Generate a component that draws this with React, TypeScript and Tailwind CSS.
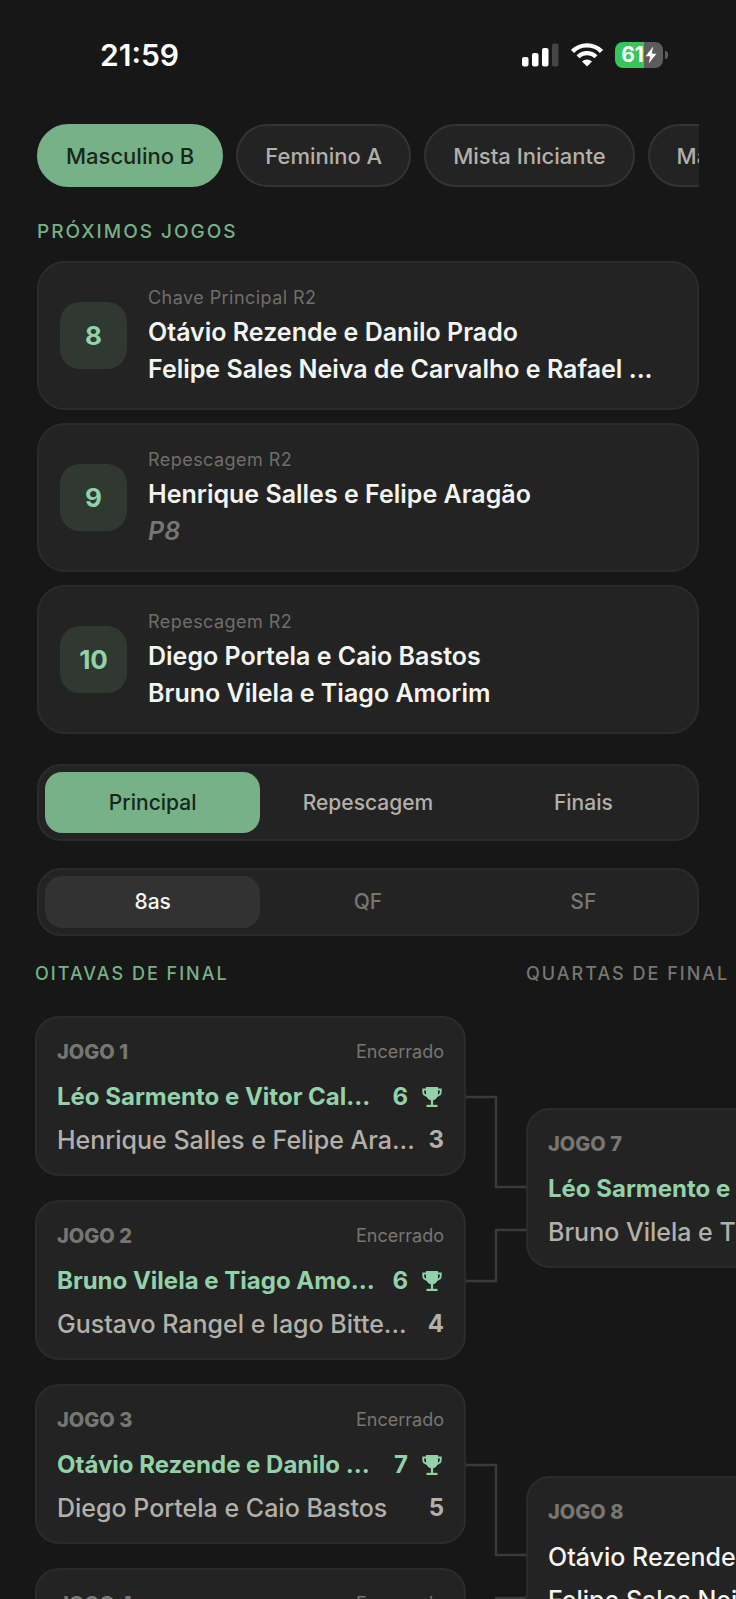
import { useState } from "react";
import clsx from "clsx";

type UpcomingGame = {
  number: number;
  stage: string;
  teams: string[];
};

type TeamScore = {
  name: string;
  score?: number;
  winner?: boolean;
};

type Match = {
  number: number;
  status?: string;
  teams: TeamScore[];
};

const categories = ["Masculino B", "Feminino A", "Mista Iniciante", "Masculino C"];
const brackets = ["Principal", "Repescagem", "Finais"];
const rounds = ["8as", "QF", "SF"];

const upcomingGames: UpcomingGame[] = [
  {
    number: 8,
    stage: "Chave Principal R2",
    teams: ["Otávio Rezende e Danilo Prado", "Felipe Sales Neiva de Carvalho e Rafael ..."],
  },
  { number: 9, stage: "Repescagem R2", teams: ["Henrique Salles e Felipe Aragão", "P8"] },
  {
    number: 10,
    stage: "Repescagem R2",
    teams: ["Diego Portela e Caio Bastos", "Bruno Vilela e Tiago Amorim"],
  },
];

const roundOf16: Match[] = [
  {
    number: 1,
    status: "Encerrado",
    teams: [
      { name: "Léo Sarmento e Vitor Cal...", score: 6, winner: true },
      { name: "Henrique Salles e Felipe Ara...", score: 3 },
    ],
  },
  {
    number: 2,
    status: "Encerrado",
    teams: [
      { name: "Bruno Vilela e Tiago Amo...", score: 6, winner: true },
      { name: "Gustavo Rangel e Iago Bitte...", score: 4 },
    ],
  },
  {
    number: 3,
    status: "Encerrado",
    teams: [
      { name: "Otávio Rezende e Danilo ...", score: 7, winner: true },
      { name: "Diego Portela e Caio Bastos", score: 5 },
    ],
  },
  { number: 4, status: "Encerrado", teams: [] },
];

const quarterFinals: Match[] = [
  {
    number: 7,
    teams: [{ name: "Léo Sarmento e Vitor Cal...", winner: true }, { name: "Bruno Vilela e Tiago Amorim" }],
  },
  {
    number: 8,
    teams: [{ name: "Otávio Rezende e Danilo Prado" }, { name: "Felipe Sales Neiva de Carv..." }],
  },
];

// "P8" means the loser of game 8, the team is not known yet
const isPlaceholder = (team: string) => /^[PV]\d+$/.test(team);

function TrophyIcon() {
  return (
    <svg viewBox="0 0 20 20" className="h-5 w-5 shrink-0" fill="none" stroke="currentColor" aria-hidden="true">
      <path d="M4 0h12v6.500c0 3.800-2.400 6.800-6 6.800S4 10.300 4 6.500z" fill="currentColor" stroke="none" />
      <path d="M5 2.500H1.200v1.800c0 2.700 1.700 4.500 4.300 4.700M15 2.500h3.800v1.800c0 2.700-1.700 4.500-4.300 4.700" strokeWidth="1.800" />
      <path d="M10 12v6.500" strokeWidth="2.200" />
      <path d="M4.500 18.900h11" strokeWidth="2.200" />
    </svg>
  );
}

function StatusBar() {
  return (
    <header className="flex h-[110px] shrink-0 items-center justify-between pr-[68px] pl-[100px] text-white">
      <span className="text-[30px] leading-9 font-semibold">21:59</span>
      <div className="flex items-center gap-3">
        <svg viewBox="0 0 37 24" className="h-6 w-[37px]" fill="currentColor" aria-hidden="true">
          <rect x="0" y="14" width="6.500" height="9.500" rx="2" />
          <rect x="10" y="10" width="6.500" height="13.500" rx="2" />
          <rect x="20" y="5" width="6.500" height="18.500" rx="2" />
          <rect x="30" y="0.500" width="6.500" height="23" rx="2" fill="#454545" />
        </svg>
        <svg viewBox="0 0 32 24" className="h-6 w-8" fill="none" stroke="currentColor" aria-hidden="true">
          <path d="M1.500 8.400a20.500 20.500 0 0 1 29 0" strokeWidth="4.400" />
          <path d="M7 13.800a12.700 12.700 0 0 1 18 0" strokeWidth="4.200" />
          <path d="M16 23.500l-5-5.100a7.200 7.200 0 0 1 10 0z" fill="currentColor" stroke="none" />
        </svg>
        <div className="flex items-center gap-0.5">
          <div className="flex h-[26px] w-12 items-center justify-center rounded-[8px] bg-linear-to-r from-[#35c759] from-60% to-[#5c5c5c] to-60% text-[21px] leading-6 font-bold">
            61
            <svg viewBox="0 0 12 18" className="ml-px h-[18px] w-3" fill="currentColor" aria-hidden="true">
              <path d="M8.200 0.500L0.500 10.200h4.700L3.700 17.500l7.800-9.700H6.800z" />
            </svg>
          </div>
          <span className="h-2 w-[3px] rounded-r-full bg-[#5c5c5c]" />
        </div>
      </div>
    </header>
  );
}

function CategoryPills() {
  const [selected, setSelected] = useState(categories[0]);

  return (
    <nav className="mt-3.5 flex shrink-0 gap-[13px] overflow-x-auto [scrollbar-width:none]">
      {categories.map((category) => (
        <button
          key={category}
          type="button"
          onClick={() => setSelected(category)}
          className={clsx(
            "h-[63px] shrink-0 rounded-full border-2 px-[27px] text-[22px] leading-7 font-medium",
            category === selected
              ? "border-[#76b187] bg-[#76b187] text-[#17271c]"
              : "border-[#333333] bg-[#232323] text-[#b3b0aa]",
          )}
        >
          {category}
        </button>
      ))}
    </nav>
  );
}

function UpcomingCard({ game }: { game: UpcomingGame }) {
  return (
    <li className="flex h-[149px] items-center gap-[21px] rounded-[28px] border-2 border-[#2b2b2b] bg-[#232323] px-[21px]">
      <span className="flex h-[67px] w-[67px] shrink-0 items-center justify-center rounded-[20px] bg-[#2f3932] text-[26px] leading-8 font-bold text-[#92d2a8]">
        {game.number}
      </span>
      <div className="min-w-0 pt-[3px]">
        <p className="mb-1 text-[18px] leading-6 tracking-wide text-[#6f6e6a]">{game.stage}</p>
        {game.teams.map((team) => (
          <p
            key={team}
            className={clsx(
              "text-[25px] leading-[37px] font-semibold whitespace-nowrap",
              isPlaceholder(team) ? "text-[#777671] italic" : "text-[#f4f4f1]",
            )}
          >
            {team}
          </p>
        ))}
      </div>
    </li>
  );
}

type SegmentedProps = {
  options: string[];
  variant: "primary" | "secondary";
};

function Segmented({ options, variant }: SegmentedProps) {
  const [selected, setSelected] = useState(options[0]);

  return (
    <div className="grid shrink-0 grid-cols-3 rounded-[24px] border-2 border-[#2b2b2b] bg-[#232323] p-1.5">
      {options.map((option) => (
        <button
          key={option}
          type="button"
          aria-pressed={option === selected}
          onClick={() => setSelected(option)}
          className={clsx(
            "rounded-[17px] text-[21px] font-medium",
            variant === "primary" ? "h-[61px]" : "h-[52px]",
            variant === "primary" && (option === selected ? "bg-[#76b187] text-[#17271c]" : "text-[#b3b0aa]"),
            variant === "secondary" && (option === selected ? "bg-[#323232] text-[#f4f4f1]" : "text-[#777671]"),
          )}
        >
          {option}
        </button>
      ))}
    </div>
  );
}

function MatchCard({ match }: { match: Match }) {
  const finished = match.teams.some((team) => team.winner);

  return (
    <article className="h-40 shrink-0 rounded-[24px] border-2 border-[#2b2b2b] bg-[#232323] px-5 pt-[22px]">
      <div className="flex items-center justify-between leading-6 text-[#777671]">
        <h3 className="text-[20px] font-extrabold">JOGO {match.number}</h3>
        {match.status && <span className="text-[18px]">{match.status}</span>}
      </div>
      <ul className="mt-[17px] flex flex-col gap-[11px]">
        {match.teams.map((team) => (
          <li
            key={team.name}
            className={clsx(
              "flex items-center leading-8",
              team.winner ? "text-[24px] font-bold text-[#92d2a8]" : "text-[25px] font-medium",
              !team.winner && (finished ? "text-[#b3b0aa]" : "text-[#f4f4f1]"),
            )}
          >
            <span className="min-w-0 flex-1 whitespace-nowrap">{team.name}</span>
            {team.score !== undefined && <span className="text-[24px] font-bold">{team.score}</span>}
            {team.winner && team.score !== undefined && (
              <span className="mr-0.5 ml-3.5">
                <TrophyIcon />
              </span>
            )}
          </li>
        ))}
      </ul>
    </article>
  );
}

// Joins two stacked matches to the two team rows of the next one
function Connector() {
  return (
    <svg viewBox="0 0 60 344" className="h-[344px] w-full shrink-0" fill="none" stroke="#3a3a3a" strokeWidth="2.500" aria-hidden="true">
      <path d="M0 81H30V171H60M0 265H30V214H60" />
    </svg>
  );
}

function Bracket() {
  return (
    <section className="mt-[26px] grid min-h-0 flex-1 grid-cols-[431px_60px_431px] grid-rows-[24px_1fr] gap-y-[30px] overflow-hidden pl-[35px]">
      <h2 className="text-[18px] leading-6 font-medium tracking-[2px] text-[#76b187]">OITAVAS DE FINAL</h2>
      <span />
      <h2 className="text-[18px] leading-6 font-medium tracking-[2px] text-[#777671]">QUARTAS DE FINAL</h2>
      <div className="flex flex-col gap-6">
        {roundOf16.map((match) => (
          <MatchCard key={match.number} match={match} />
        ))}
      </div>
      <div className="flex flex-col gap-6">
        <Connector />
        <Connector />
      </div>
      <div className="flex flex-col gap-52 pt-[92px]">
        {quarterFinals.map((match) => (
          <MatchCard key={match.number} match={match} />
        ))}
      </div>
    </section>
  );
}

export default function App() {
  return (
    <main className="flex h-screen flex-col overflow-hidden bg-[#171717] font-['Inter',sans-serif]">
      <StatusBar />
      <div className="flex shrink-0 flex-col px-[37px]">
        <CategoryPills />
        <h2 className="mt-[33px] text-[19px] leading-6 font-medium tracking-[2px] text-[#76b187]">PRÓXIMOS JOGOS</h2>
        <ul className="mt-[17px] mb-[30px] flex flex-col gap-[13px]">
          {upcomingGames.map((game) => (
            <UpcomingCard key={game.number} game={game} />
          ))}
        </ul>
        <div className="flex flex-col gap-[27px]">
          <Segmented options={brackets} variant="primary" />
          <Segmented options={rounds} variant="secondary" />
        </div>
      </div>
      <Bracket />
    </main>
  );
}
